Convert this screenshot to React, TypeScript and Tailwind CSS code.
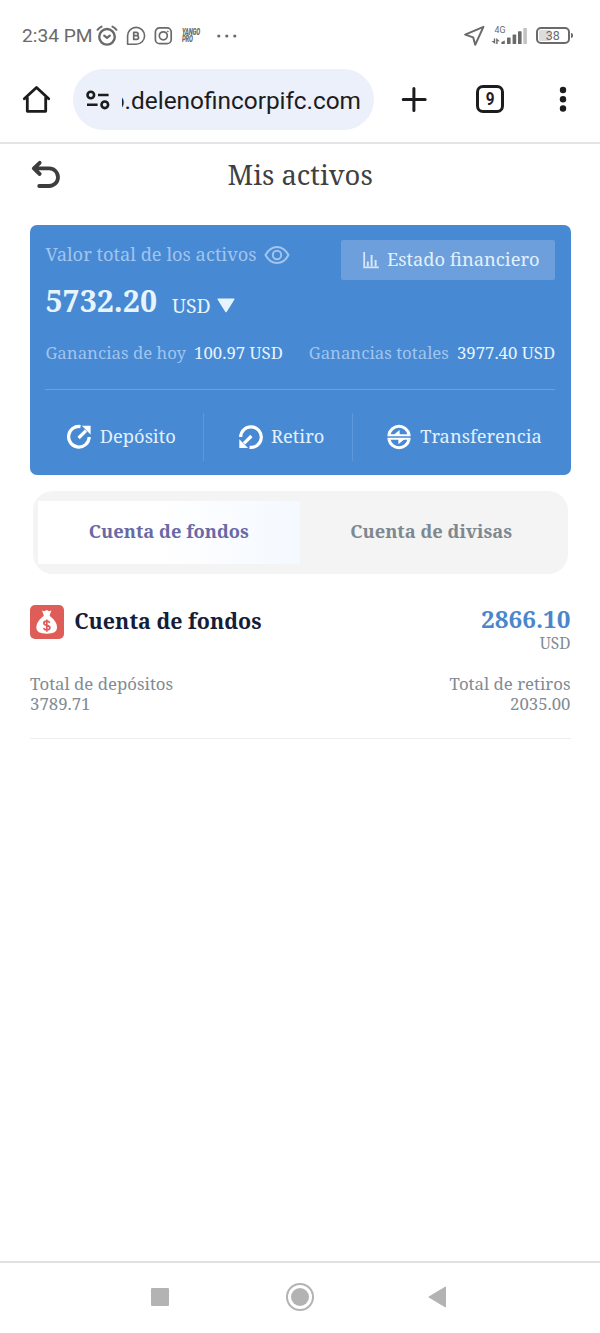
import React from "react";

function StatusBar() {
  return (
    <div className="flex h-[68px] items-center pl-[22px] pr-[27px] pt-1 text-[#6a6a6a]">
      <span className="w-[70px] whitespace-nowrap font-['Roboto',sans-serif] text-[19.2px] leading-6">2:34 PM</span>
      <svg className="-mt-px ml-1" width="22" height="22" viewBox="0 0 22 22" fill="none" stroke="currentColor" strokeWidth="2.4" strokeLinecap="round" strokeLinejoin="round">
        <circle cx="11" cy="11.8" r="7.8" />
        <path d="M8.200 10.600 11 12.900l2.800-2.300" strokeWidth="2.200" />
        <path d="M1.500 4.800A11.500 11.500 0 0 1 5.600 1.600M20.500 4.800a11.500 11.500 0 0 0-4.100-3.200" strokeWidth="2" />
      </svg>
      <svg className="ml-[8px]" width="20" height="20" viewBox="0 0 20 20" fill="none" stroke="currentColor" strokeWidth="1.6" strokeLinejoin="round">
        <path d="M1.600 18.200V9.800A8.500 8.400 0 1 1 10.100 18.200Z" />
        <path d="M7.700 6.300v7h3a1.800 1.800 0 0 0 0-3.600h-3 2.700a1.700 1.700 0 0 0 0-3.400Z" strokeWidth="1.700" />
      </svg>
      <svg className="ml-[8px]" width="19" height="19" viewBox="0 0 19 19" fill="none" stroke="currentColor" strokeWidth="1.7">
        <rect x="1.400" y="0.900" width="15.800" height="15.800" rx="4.200" />
        <circle cx="9.300" cy="8.800" r="4" />
        <circle cx="13.800" cy="4.500" r="0.6" fill="currentColor" strokeWidth="0.6" />
      </svg>
      <div className="ml-[9px] flex h-[14px] w-[20px] items-center">
        <span className="block origin-left scale-x-[0.68] whitespace-nowrap font-['Roboto',sans-serif] text-[8.600px] font-black italic leading-[6.800px] tracking-[-0.2px]">
          YANGO<br />PRO
        </span>
      </div>
      <svg className="-mt-px ml-[15px]" width="20" height="4" viewBox="0 0 20 4" fill="currentColor">
        <circle cx="1.800" cy="2" r="1.600" /><circle cx="9.800" cy="2" r="1.600" /><circle cx="17.800" cy="2" r="1.600" />
      </svg>
      <svg className="ml-auto" width="22" height="22" viewBox="0 0 22 22" fill="none" stroke="currentColor" strokeWidth="2" strokeLinejoin="round">
        <path d="M19.400 1.800 1.200 9.600l8 2.800 2 7.400Z" />
      </svg>
      <div className="ml-[5px] flex h-[20px] w-[37px] flex-col">
        <span className="pl-[4px] font-['Roboto',sans-serif] text-[8.800px] leading-[9px]">4G</span>
        <svg className="-mt-[8px] shrink-0" width="38" height="18" viewBox="0 0 38 18" fill="currentColor">
          <path d="M2.800 11.500h1.400V17L0.400 14h2.400ZM5.200 17v-6l3.600 3.300H6.600V17Z" />
          <path d="M10.400 17v-2l3.400-1.400V17Z" />
          <rect x="16" y="10.500" width="3.600" height="6.500" rx="0.600" />
          <rect x="21.600" y="7.600" width="3.600" height="9.400" rx="0.600" />
          <rect x="27" y="4.200" width="3.600" height="12.800" rx="0.600" />
          <rect x="32.300" y="1" width="3.600" height="16" rx="0.600" opacity="0.400" />
        </svg>
      </div>
      <div className="-mt-px ml-[8px] flex h-[17px] w-[34.500px] items-center rounded-[5px] border-2 border-[#6a6a6a] p-px">
        <span className="flex h-full w-full items-center justify-center rounded-[2px] bg-linear-to-r from-[#dcdcdc] from-40% to-white to-40% pt-px font-['Roboto',sans-serif] text-[12.500px] leading-none">38</span>
      </div>
      <span className="-mt-px ml-px h-[5px] w-[2px] rounded-r bg-[#6a6a6a]" />
    </div>
  );
}

function BrowserBar() {
  return (
    <div className="flex h-[76px] items-start border-b-2 border-[#e4e4e4] pl-[22px] pt-px text-[#1c1c1f]">
      <svg className="mt-[16px]" width="30" height="30" viewBox="0 0 30 30" fill="none" stroke="currentColor" strokeWidth="2.800" strokeLinejoin="round" strokeLinecap="round">
        <path d="M2.300 13.800 14.500 2.500l12.200 11.300M5.300 12.500v13.800h18.400V12.500" />
      </svg>
      <div className="ml-[21px] flex h-[61px] w-[301px] items-center rounded-full bg-[#ebf0fa] pl-[13px]">
        <svg width="24" height="20" viewBox="0 0 24 20" fill="none" stroke="currentColor" strokeWidth="2.600">
          <circle cx="4.800" cy="5" r="3.300" /><path d="M12 5h10.600M1 14.800h10.600" /><circle cx="18.800" cy="14.800" r="3.300" />
        </svg>
        <div className="ml-[12px] mt-[2px] flex w-[239px] justify-end overflow-hidden">
          <span className="whitespace-nowrap font-['Roboto',sans-serif] text-[24.400px] leading-8">o.delenofincorpifc.com</span>
        </div>
      </div>
      <svg className="ml-[27px] mt-[17px]" width="26" height="26" viewBox="0 0 26 26" stroke="currentColor" strokeWidth="3" strokeLinecap="round">
        <path d="M2.200 13.500h22M12.900 2.500v22" />
      </svg>
      <div className="ml-[49px] mt-[16px] flex h-[28px] w-[28px] items-center justify-center rounded-[7px] border-3 border-[#1c1c1f] font-['Roboto',sans-serif] text-[18px] font-bold leading-none">
        <span className="scale-x-85">9</span>
      </div>
      <svg className="ml-[55px] mt-[17px]" width="8" height="26" viewBox="0 0 8 26" fill="currentColor">
        <circle cx="4" cy="4" r="3.200" /><circle cx="4" cy="13.300" r="3.200" /><circle cx="4" cy="22.500" r="3.200" />
      </svg>
    </div>
  );
}

function Gain({ label, value }: { label: string; value: string }) {
  return (
    <p className="whitespace-nowrap text-[16.800px] leading-6 text-[#a0c5ee]">
      {label}<span className="ml-[8px] text-[#e6f4fe]">{value}</span>
    </p>
  );
}

function AssetsCard() {
  return (
    <section className="ml-[30px] mt-[19px] h-[250px] w-[540.500px] rounded-[7px] bg-[#4889d3] px-[15.400px] pt-[15px]">
      <div className="flex h-[40px] items-start justify-between">
        <div className="flex items-center text-[#a0c5ee]">
          <span className="whitespace-nowrap text-[18.300px] leading-[28px]">Valor total de los activos</span>
          <svg className="ml-[7px] mt-[2px]" width="26" height="20" viewBox="0 0 26 20" fill="none" stroke="currentColor" strokeWidth="2">
            <path d="M1.500 10C4.400 4.600 8.400 1.900 13 1.900S21.600 4.600 24.500 10C21.600 15.400 17.600 18.100 13 18.100S4.400 15.400 1.500 10Z" />
            <circle cx="13" cy="10" r="4.200" />
          </svg>
        </div>
        <div className="flex h-[40px] w-[214px] items-center rounded-[2px] bg-[#6c9fdb] pl-[21.500px] text-[#e2f1fd]">
          <svg width="16" height="18" viewBox="0 0 16 18" fill="none" stroke="#d5e6f8">
            <path d="M1.200 1v15.300h14.600" strokeWidth="1.800" /><path d="M4.800 15.500v-5M8.600 15.500V4M12.600 15.500V9" strokeWidth="2" />
          </svg>
          <span className="ml-[8.300px] whitespace-nowrap pb-[2px] text-[18.300px] leading-6">Estado financiero</span>
        </div>
      </div>
      <div className="flex h-[44px] items-baseline text-[#e6f4fe]">
        <span className="text-[30.300px] font-bold leading-[42px]">5732.20</span>
        <span className="relative top-px ml-[15px] text-[19.500px] leading-6">USD</span>
        <svg className="relative top-px ml-[6px]" width="18" height="15" viewBox="0 0 18 15" fill="currentColor" stroke="currentColor" strokeWidth="1.500" strokeLinejoin="round"><path d="M1.200 1.200h15.600L9 13.500Z" /></svg>
      </div>
      <div className="mt-px flex h-[65px] justify-between border-b border-[#6c9fdc] pt-[16px]">
        <Gain label="Ganancias de hoy" value="100.97 USD" />
        <Gain label="Ganancias totales" value="3977.40 USD" />
      </div>
      <div className="mt-[23px] flex h-[48px] items-center text-[18.300px] leading-6 text-[#e2f1fd]">
        <div className="flex h-full w-[158.600px] items-center border-r border-[#5f98da] pl-[20.600px]">
          <svg width="26" height="26" viewBox="0 0 26 26" fill="none" stroke="#fff" strokeWidth="3.200">
            <path d="M14.500 2.600A10.300 10.300 0 1 0 23.200 13M12.600 14 20 6.600" /><path d="M15.800 1.800h8.800v8.800Z" fill="#fff" stroke="none" />
          </svg>
          <span className="ml-[7.800px] pb-[2px]">Depósito</span>
        </div>
        <div className="flex h-full w-[149px] items-center border-r border-[#5f98da] pl-[33.600px]">
          <svg width="26" height="26" viewBox="0 0 26 26" fill="none" stroke="#fff" strokeWidth="3.200">
            <path d="M11.500 23.300A10.300 10.300 0 1 0 2.700 13M13.400 12 6 19.400" /><path d="M10 24.100H1.300v-8.800Z" fill="#fff" stroke="none" />
          </svg>
          <span className="ml-[7.500px] pb-[2px]">Retiro</span>
        </div>
        <div className="flex h-full items-center pl-[33.400px]">
          <svg width="26" height="26" viewBox="0 0 26 26" fill="none" stroke="#fff" strokeWidth="3.100">
            <path d="M3 10.500a10.200 10.200 0 0 1 20 0M23 15.500a10.200 10.200 0 0 1-20 0" />
            <path d="M1.500 11.300h23M1.500 14.800h23" strokeWidth="1.900" /><path d="M7.300 11.200 13.600 6v5.200ZM18.700 14.900l-6.300 5.300v-5.300Z" fill="#fff" stroke="none" />
          </svg>
          <span className="ml-[7.800px] pb-[2px]">Transferencia</span>
        </div>
      </div>
    </section>
  );
}

function Tabs() {
  return (
    <div className="ml-[33px] mt-[16px] flex h-[83px] w-[534.500px] items-center rounded-[20px] bg-[#f4f4f4] px-[5px] text-[18.300px] font-bold">
      <div className="flex h-[63px] w-[262px] items-center justify-center bg-linear-to-r from-white from-45% to-[#f4f9ff] pb-[3px] text-[#696aa5]">Cuenta de fondos</div>
      <div className="flex h-[63px] w-[263px] items-center justify-center pb-[3px] text-[#7e888e]">Cuenta de divisas</div>
    </div>
  );
}

function FundAccount() {
  return (
    <section className="ml-[30px] mt-[31px] flex h-[134px] w-[540.500px] flex-col border-b-[1.500px] border-[#ededed] text-[16.800px] leading-[19.500px] text-[#828b92]">
      <div className="flex h-[52px] justify-between">
        <div className="flex h-[34px] items-center">
          <svg width="34" height="34" viewBox="0 0 34 34">
            <rect width="34" height="34" rx="5" fill="#df5d59" />
            <path d="M12 5.500l2.300.8L16.700 5l2.300 1.300 2.400-.8-2 5.500h-5.400Z" fill="#fff" />
            <path d="M14 10.500h5.400c3.600 3 7.600 7 7.600 11.800 0 4.700-3.400 6.400-10.300 6.400S6.400 27 6.400 22.300C6.400 17.500 10.400 13.500 14 10.500Z" fill="#fff" />
            <path d="M19.700 17.800c-.5-1.100-1.600-1.600-3-1.600-1.700 0-2.800.8-2.800 2 0 3 6 1.400 6 4.500 0 1.400-1.300 2.200-3.100 2.200-1.600 0-2.800-.6-3.200-1.900M16.800 14.400v12.300" fill="none" stroke="#df5d59" strokeWidth="1.700" />
          </svg>
          <h2 className="ml-[10.300px] pb-[3px] text-[21.400px] font-bold leading-8 text-[#151d38]">Cuenta de fondos</h2>
        </div>
        <div className="text-right">
          <p className="-mt-px text-[24.300px] font-bold leading-[30px] text-[#4b86ca]">2866.10</p>
          <p className="text-[15.500px] leading-[18px]">USD</p>
        </div>
      </div>
      <div className="mt-[17px] flex justify-between">
        <p>Total de depósitos<br />3789.71</p>
        <p className="text-right">Total de retiros<br />2035.00</p>
      </div>
    </section>
  );
}

export default function App() {
  return (
    <main className="flex h-[1333px] w-[600px] flex-col overflow-hidden bg-white font-['Noto_Serif','DejaVu_Serif_Condensed',serif]">
      <StatusBar />
      <BrowserBar />
      <header className="flex h-[62px] items-center pl-[30.500px]">
        <svg width="30" height="30" viewBox="0 0 30 30" fill="none" stroke="#3d3d3f" strokeWidth="3.800" strokeLinecap="round" strokeLinejoin="round">
          <path d="M8.700 2.800 2.800 8.400 8.700 14M3.300 8.400H18.200a8.800 8.800 0 0 1 0 17.600H8.200" />
        </svg>
        <h1 className="ml-[167px] text-[27.400px] leading-9 text-[#3f4043]">Mis activos</h1>
      </header>
      <AssetsCard />
      <Tabs />
      <FundAccount />
      <nav className="mt-auto flex h-[72px] items-center border-t-2 border-[#e0e0e0] pb-[2px] pl-[151px] text-[#b3b3b3]">
        <span className="h-[18px] w-[18px] rounded-[1px] bg-current" />
        <span className="ml-[117px] flex h-[28px] w-[28px] items-center justify-center rounded-full border-2 border-current"><span className="h-[18px] w-[18px] rounded-full bg-current" /></span>
        <svg className="ml-[114px]" width="18" height="22" viewBox="0 0 18 22" fill="currentColor" stroke="currentColor" strokeLinejoin="round"><path d="M17.500 1v20L0.800 11Z" /></svg>
      </nav>
    </main>
  );
}
